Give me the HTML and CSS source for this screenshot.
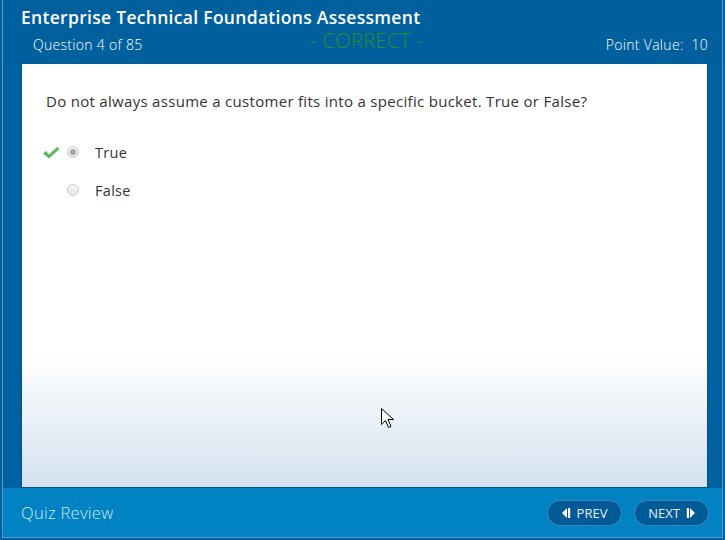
FILE: index.html
```html
<!DOCTYPE html>
<html>
<head>
<meta charset="utf-8">
<link rel="stylesheet" href="styles.css">
</head>
<body>
<div class="app">
  <header class="head">
    <h1 class="title">Enterprise Technical Foundations Assessment</h1>
    <div class="subline">
      <span class="qnum">Question 4 of 85</span>
      <span class="status">- CORRECT -</span>
      <span class="points">Point Value:&nbsp; 10</span>
    </div>
  </header>
  <main class="panel">
    <p class="question">Do not always assume a customer fits into a specific bucket. True or False?</p>
    <ul class="options">
      <li class="option">
        <span class="mark"><svg width="18" height="14" viewBox="0 0 18 14"><path d="M1 7.5 L4 5 L7 8.5 L15 1 L17.5 3 L7 12.5 Z" fill="#5cb85c"/></svg></span>
        <span class="radio checked"></span>
        <span class="label">True</span>
      </li>
      <li class="option">
        <span class="mark"></span>
        <span class="radio"></span>
        <span class="label">False</span>
      </li>
    </ul>
    <svg class="cursor" width="14" height="21" viewBox="0 0 14 21"><path d="M0.5 0.5 L0.5 16.5 L4.5 12.5 L7.5 19.5 L10 18.5 L7 11.5 L12.5 11.5 Z" fill="#fff" stroke="#000" stroke-width="1"/></svg>
  </main>
  <footer class="foot">
    <span class="review">Quiz Review</span>
    <nav class="nav">
      <button class="btn"><svg width="9" height="10" viewBox="0 0 9 10"><path d="M5 0 L0 5 L5 10 Z" fill="#fff"/><rect x="6" y="0" width="2.2" height="10" fill="#fff"/></svg>PREV</button>
      <button class="btn">NEXT<svg width="9" height="10" viewBox="0 0 9 10"><rect x="0.8" y="0" width="2.2" height="10" fill="#fff"/><path d="M4 0 L9 5 L4 10 Z" fill="#fff"/></svg></button>
    </nav>
  </footer>
</div>
</body>
</html>
```
FILE: styles.css
```css
* { box-sizing: border-box; }
html, body { margin: 0; padding: 0; }
body {
  width: 725px;
  height: 540px;
  background: #0a5e98;
  font-family: "Open Sans", "Liberation Sans", sans-serif;
  overflow: hidden;
}
.app {
  width: 721px;
  height: 538px;
  margin: 0 0 0 2px;
  border: 1px solid #4f9fd5;
  border-top: none;
  display: flex;
  flex-direction: column;
  background: #0061a0;
  position: relative;
}
.head {
  background: #00609e;
  padding: 5px 0 0 18px;
  height: 64px;
}
.title {
  margin: 0;
  font-size: 17.5px;
  font-weight: 600;
  color: #fff;
  line-height: 24px;
  letter-spacing: 0.3px;
}
.subline {
  display: grid;
  grid-template-columns: 1fr auto 1fr;
  align-items: center;
  padding: 3px 14px 0 12px;
  height: 27px;
  color: #fff;
  font-size: 14px;
  font-weight: 300;
  letter-spacing: 0.3px;
}
.status {
  color: #2f8f2a;
  font-size: 20px;
  font-weight: 300;
  margin-top: -7px;
  margin-right: 8px;
  letter-spacing: 0.4px;
}
.points {
  justify-self: end;
}
.panel {
  margin: 0 14px 0 18px;
  height: 424px;
  background: linear-gradient(to bottom, #ffffff 0, #ffffff 290px, #d3e1ee 424px);
  border: 1px solid #0a4f80;
  border-top: none;
  padding: 27px 0 0 24px;
  position: relative;
  color: #333;
}
.question {
  margin: 0;
  font-size: 15px;
  line-height: 20px;
  letter-spacing: 0.3px;
}
.options {
  list-style: none;
  margin: 0;
  padding: 0;
  margin-top: 22px;
  margin-left: -4px;
}
.option {
  display: flex;
  align-items: center;
  height: 38px;
  font-size: 14.5px;
  letter-spacing: 0.3px;
}
.mark {
  width: 22px;
  display: flex;
  align-items: center;
  padding-top: 2px;
}
.radio {
  width: 12px;
  height: 12px;
  border-radius: 50%;
  border: 1px solid #cfcfcf;
  background: linear-gradient(#f4f4f4, #e4e4e4);
  margin-left: 3px;
  margin-right: 16px;
  position: relative;
}
.radio.checked::after {
  content: "";
  position: absolute;
  left: 2px;
  top: 2px;
  width: 6px;
  height: 6px;
  border-radius: 50%;
  background: #a9a9a9;
}
.cursor {
  position: absolute;
  left: 359px;
  top: 344px;
}
.foot {
  flex: 1;
  background: #0082c3;
  display: flex;
  justify-content: space-between;
  align-items: center;
  padding: 0 13px 0 18px;
}
.review {
  color: #d4e8f5;
  font-size: 16.5px;
  font-weight: 300;
  letter-spacing: 0.3px;
}
.nav {
  display: flex;
  gap: 12px;
}
.btn {
  width: 75px;
  height: 26px;
  border-radius: 13px;
  background: #005a95;
  border: 1px solid #3f88bf;
  color: #e6eef5;
  font-family: "Open Sans", "Liberation Sans", sans-serif;
  font-size: 13px;
  display: flex;
  align-items: center;
  justify-content: center;
  gap: 6px;
  padding: 0;
}
```
